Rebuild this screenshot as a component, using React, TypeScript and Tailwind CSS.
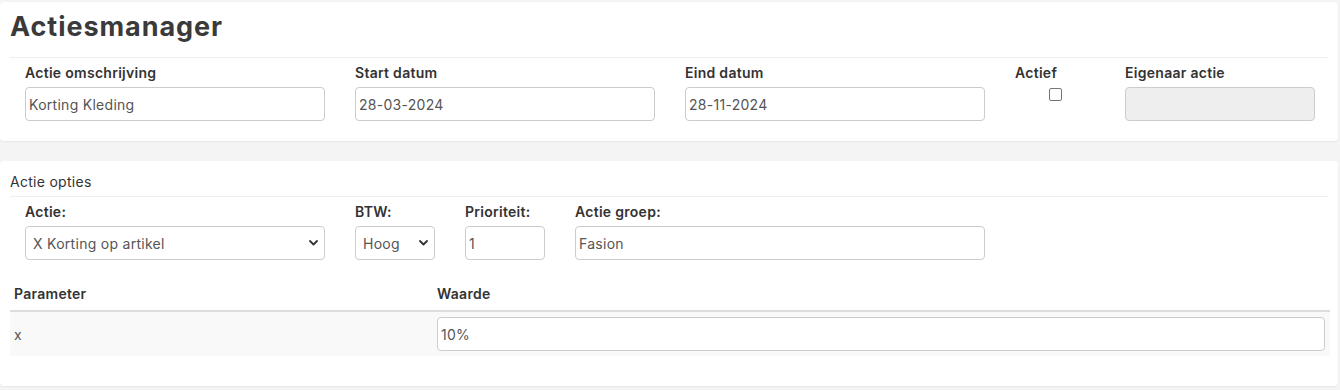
import { ReactNode } from 'react'

const font = { fontFamily: 'Inter, "Noto Sans", sans-serif' }

function Label({ children }: { children: ReactNode }) {
  return <label className="mb-[4px] block text-[14px] font-semibold leading-[20px] tracking-[0.02em] text-[#333]">{children}</label>
}

function TextInput({ value, className = '', disabled = false }: { value: string; className?: string; disabled?: boolean }) {
  return (
    <input
      readOnly
      disabled={disabled}
      value={value}
      className={`h-[34px] rounded-[4px] border border-[#ccc] px-[3px] text-[14px] tracking-[0.02em] text-[#555] outline-none ${disabled ? 'bg-[#eee]' : 'bg-white'} ${className}`}
    />
  )
}

function Select({ value, className = '' }: { value: string; className?: string }) {
  return (
    <div className={`relative ${className}`}>
      <select
        defaultValue={value}
        className="h-[34px] w-full appearance-none rounded-[4px] border border-[#ccc] bg-white pl-[7px] pr-[20px] text-[14px] tracking-[0.02em] text-[#555] outline-none"
      >
        <option>{value}</option>
      </select>
      <svg
        className="pointer-events-none absolute right-[7px] top-[14px] h-[6px] w-[9px]"
        viewBox="0 0 9 6"
        fill="none"
        stroke="#333"
        strokeWidth="1.8"
        strokeLinecap="round"
        strokeLinejoin="round"
      >
        <path d="M1 1l3.5 3.5L8 1" />
      </svg>
    </div>
  )
}

export default function App() {
  return (
    <div className="min-h-[390px] bg-[#f4f4f4] pt-[2px]" style={font}>
      <section className="mr-[2px] rounded-[4px] bg-white pb-[20px] shadow-[0_1px_2px_rgba(0,0,0,0.06)]">
        <h1 className="px-[10px] pt-[9px] pb-[14px] text-[27px] font-bold leading-[32px] tracking-[0.035em] text-[#3a3a3a]">Actiesmanager</h1>
        <div className="mx-[10px] border-t border-[#eee]" />
        <div className="flex gap-[30px] px-[25px] pt-[5px]">
          <div className="w-[300px] shrink-0">
            <Label>Actie omschrijving</Label>
            <TextInput value="Korting Kleding" className="w-full" />
          </div>
          <div className="w-[300px] shrink-0">
            <Label>Start datum</Label>
            <TextInput value="28-03-2024" className="w-full" />
          </div>
          <div className="w-[300px] shrink-0">
            <Label>Eind datum</Label>
            <TextInput value="28-11-2024" className="w-full" />
          </div>
          <div className="w-[80px] shrink-0">
            <Label>Actief</Label>
            <div className="flex justify-center">
              <span className="mt-[1px] block h-[13px] w-[13px] rounded-[2px] border border-[#767676] bg-white" />
            </div>
          </div>
          <div className="w-[190px] shrink-0">
            <Label>Eigenaar actie</Label>
            <TextInput value="" disabled className="w-full" />
          </div>
        </div>
      </section>

      <section className="mt-[20px] mr-[2px] rounded-[4px] bg-white pb-[30px] shadow-[0_1px_2px_rgba(0,0,0,0.06)]">
        <div className="px-[10px] pt-[11px] pb-[4px] text-[14px] leading-[20px] tracking-[0.02em] text-[#333]">Actie opties</div>
        <div className="mx-[10px] border-t border-[#eee]" />
        <div className="flex gap-[30px] px-[25px] pt-[5px]">
          <div className="w-[300px] shrink-0">
            <Label>Actie:</Label>
            <Select value="X Korting op artikel" className="w-full" />
          </div>
          <div className="w-[80px] shrink-0">
            <Label>BTW:</Label>
            <Select value="Hoog" className="w-full" />
          </div>
          <div className="w-[80px] shrink-0">
            <Label>Prioriteit:</Label>
            <TextInput value="1" className="w-full" />
          </div>
          <div className="w-[410px] shrink-0">
            <Label>Actie groep:</Label>
            <TextInput value="Fasion" className="w-full" />
          </div>
        </div>

        <table className="mx-[10px] mt-[22px] w-[1320px] border-collapse text-[14px] tracking-[0.02em]">
          <thead>
            <tr className="border-b-2 border-[#ddd]">
              <th className="w-[423px] px-[4px] pt-[2px] pb-[6px] text-left font-semibold leading-[20px] text-[#333]">Parameter</th>
              <th className="px-[4px] pt-[2px] pb-[6px] text-left font-semibold leading-[20px] text-[#333]">Waarde</th>
            </tr>
          </thead>
          <tbody>
            <tr className="bg-[#f9f9f9]">
              <td className="px-[4px] align-middle text-[#555]">x</td>
              <td className="py-[5px] pr-[5px] pl-[4px]">
                <TextInput value="10%" className="w-full" />
              </td>
            </tr>
          </tbody>
        </table>
      </section>
    </div>
  )
}
